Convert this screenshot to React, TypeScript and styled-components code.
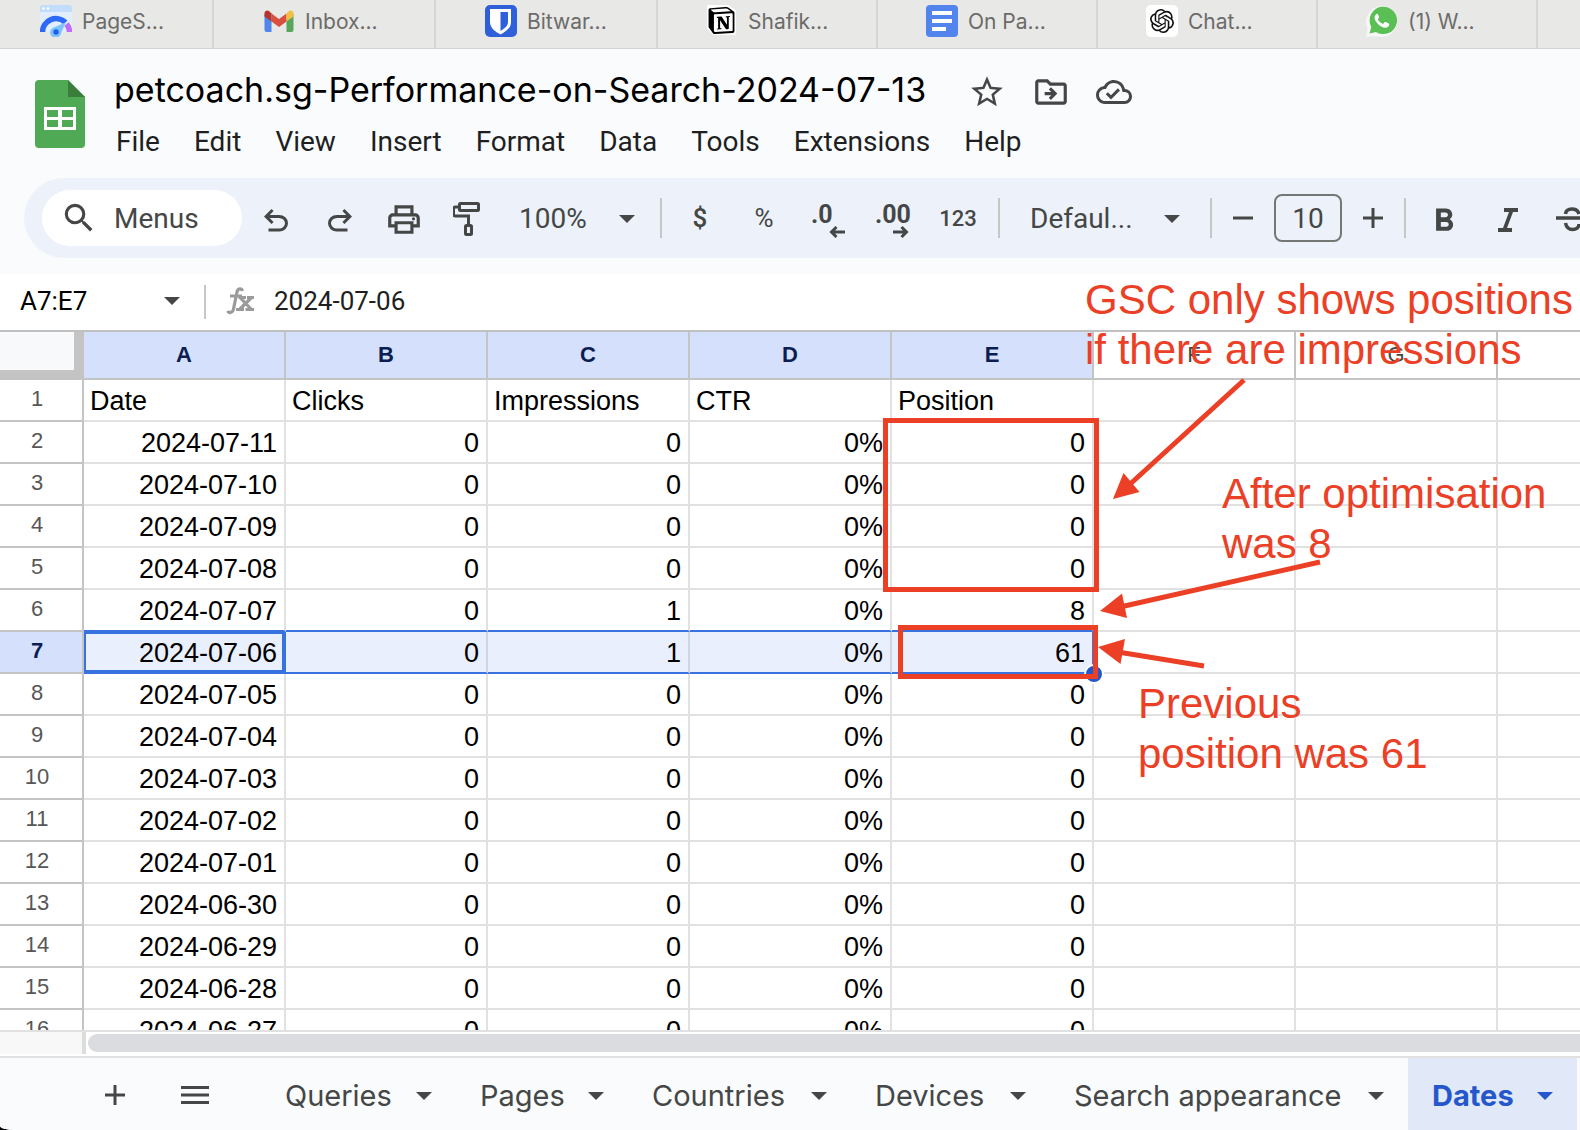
import React from "react";
import styled, { createGlobalStyle, css } from "styled-components";
import {
  MdStarBorder,
  MdOutlineDriveFileMove,
  MdOutlineCloudDone,
  MdSearch,
  MdOutlinePrint,
} from "react-icons/md";
import { SiOpenai, SiNotion } from "react-icons/si";

const ui = `Roboto, "Noto Sans", sans-serif`;
const display = `Inter, "Noto Sans", sans-serif`;
const cellFont = `"Liberation Sans", Arial, sans-serif`;
const red = "#eb4026";
const ink = "#444746";
const blue = "#3871e0";
const chrome = "#f9fbfd";

const Global = createGlobalStyle`
  * { box-sizing: border-box; }
  body { margin: 0; background: #000; font-family: ${ui}; }
  button, input, select { font: inherit; color: inherit; border: 0; padding: 0; margin: 0; background: none; outline: 0; }
  svg { display: block; flex: none; }
`;

const Window = styled.div`
  height: 100vh;
  display: flex;
  flex-direction: column;
  overflow: hidden;
  background: ${chrome};
  border-bottom-left-radius: 15px 4px;
`;

/* ---------- browser tabs ---------- */
const BrowserTabs = styled.nav`
  flex: none;
  display: flex;
  height: 49px;
  background: #e8e8e6;
  border-bottom: 1px solid #d2d2d1;
  overflow: hidden;
`;

const BrowserTab = styled.button<{ $w: number; $cut?: boolean }>`
  flex: none;
  width: ${(p) => p.$w}px;
  display: flex;
  align-items: center;
  justify-content: center;
  gap: 10px;
  padding: 0 ${(p) => (p.$cut ? 10 : 0)}px 6px 0;
  border-right: 2px solid #d6d6d5;
  color: #6b6b6a;
  font-family: ${display};
  font-size: 21px;
  line-height: 28px;
`;

const TabLabel = styled.span`
  width: 80px;
  padding-top: 2px;
  text-align: left;
  white-space: nowrap;
`;

const Tile = styled.span`
  width: 32px;
  height: 32px;
  flex: none;
  display: grid;
  place-items: center;
  border-radius: 5px;
  background: #fff;
  color: #111;
`;

/* ---------- document header ---------- */
const Header = styled.header`
  flex: none;
  padding: 17px 0 16px;
  background: ${chrome};
`;

const HeaderTop = styled.div`
  display: flex;
  gap: 29px;
  padding-left: 35px;
`;

const LogoBox = styled.a`
  padding-top: 14px;
`;

const TitleRow = styled.div`
  display: flex;
  align-items: flex-start;
  height: 52px;
`;

const DocTitle = styled.h1`
  margin: 0;
  min-width: 854px;
  font-family: ${display};
  font-size: 34px;
  font-weight: 400;
  line-height: 48px;
  color: #000;
  white-space: nowrap;
`;

const TitleActions = styled.div`
  display: flex;
  gap: 28px;
`;

const TitleAction = styled.button`
  width: 36px;
  height: 52px;
  display: grid;
  place-items: center;
  color: ${ink};
`;

const MenuBar = styled.div`
  display: flex;
  gap: 34px;
  height: 44px;
  padding-left: 2px;
`;

const MenuItem = styled.button`
  font-size: 28px;
  line-height: 44px;
  padding-top: 2px;
  color: #1f1f1f;
`;

/* ---------- toolbar ---------- */
const Toolbar = styled.div`
  display: flex;
  align-items: center;
  height: 80px;
  margin: 16px 0 0 24px;
  padding-left: 18px;
  border-radius: 40px 0 0 40px;
  background: #edf2fa;
  color: ${ink};
  overflow: hidden;
`;

const MenuSearch = styled.label`
  flex: none;
  display: flex;
  align-items: center;
  gap: 16px;
  width: 200px;
  height: 56px;
  padding-left: 18px;
  margin-right: 2px;
  border-radius: 28px;
  background: #fff;
`;

const MenuSearchInput = styled.input`
  width: 110px;
  font-size: 28px;
  &::placeholder { color: ${ink}; opacity: 1; }
`;

const Tool = styled.button<{ $w?: number; $size?: number; $bold?: boolean }>`
  flex: none;
  width: ${(p) => p.$w ?? 64}px;
  height: 56px;
  display: grid;
  place-items: center;
  font-size: ${(p) => p.$size ?? 26}px;
  font-weight: ${(p) => (p.$bold ? 500 : 400)};
`;

const Rule = styled.span`
  flex: none;
  width: 2px;
  height: 40px;
  margin: 0 6px;
  background: #c7c7c7;
`;

const Picker = styled.label<{ $w: number; $pad: number }>`
  flex: none;
  display: flex;
  align-items: center;
  justify-content: space-between;
  width: ${(p) => p.$w}px;
  padding: 2px ${(p) => p.$pad}px 0;
  font-size: 28px;
  select { appearance: none; line-height: 40px; }
`;

const Decimal = styled.span`
  display: flex;
  flex-direction: column;
  align-items: flex-start;
  width: 34px;
  padding-top: 5px;
  font-size: 25px;
  font-weight: 700;
  line-height: 22px;
  svg { align-self: flex-end; }
`;

const SizeInput = styled.input`
  flex: none;
  width: 68px;
  height: 48px;
  margin: 0 6px;
  border: 2px solid #747775;
  border-radius: 8px;
  text-align: center;
  font-size: 28px;
`;

/* ---------- formula bar ---------- */
const Workspace = styled.main`
  position: relative;
  flex: 1;
  min-height: 0;
  display: flex;
  flex-direction: column;
  background: #fff;
`;

const FormulaBar = styled.div`
  flex: none;
  display: flex;
  align-items: center;
  height: 56px;
  padding: 0 0 2px 20px;
  color: ${ink};
`;

const NameBox = styled.input`
  width: 144px;
  font-size: 26px;
  color: #000;
`;

const BarRule = styled.span`
  width: 2px;
  height: 34px;
  margin: 2px 20px 0 24px;
  background: #c7c7c7;
`;

const FormulaInput = styled.input`
  flex: 1;
  margin-left: 20px;
  font-size: 26px;
  color: #1f1f1f;
`;

/* ---------- grid ---------- */
const GridView = styled.div`
  flex: 1;
  min-height: 0;
  overflow: hidden;
  border-top: 2px solid #c0c0c0;
`;

const Sheet = styled.table`
  table-layout: fixed;
  width: 1700px;
  border-collapse: separate;
  border-spacing: 0;
  font-family: ${cellFont};
`;

const RowHeadCol = styled.col`
  width: 84px;
`;

const Corner = styled.td`
  height: 48px;
  padding: 0;
  background: #f8f9fa;
  border-right: 10px solid #c4c4c4;
  border-bottom: 10px solid #c4c4c4;
`;

const ColHead = styled.th<{ $on: boolean }>`
  height: 48px;
  padding: 0;
  border-right: 2px solid #c4c4c4;
  border-bottom: 2px solid #c4c4c4;
  background: ${(p) => (p.$on ? "#d5e1fc" : "#fff")};
  color: ${(p) => (p.$on ? "#0b1d51" : ink)};
  font-size: 22px;
  line-height: 24px;
  font-weight: ${(p) => (p.$on ? 700 : 400)};
`;

const RowHead = styled.th<{ $on: boolean }>`
  height: 42px;
  padding: 0 8px 2px 0;
  border-right: 2px solid #c4c4c4;
  border-bottom: 2px solid #c4c4c4;
  background: ${(p) => (p.$on ? "#d5e1fc" : "#fff")};
  color: ${(p) => (p.$on ? "#0b1d51" : "#575757")};
  font-size: 22px;
  line-height: 36px;
  font-weight: ${(p) => (p.$on ? 700 : 400)};
`;

const Cell = styled.td<{
  $left?: boolean;
  $range?: boolean;
  $aboveRange?: boolean;
  $active?: boolean;
  $rangeEnd?: boolean;
}>`
  height: 42px;
  padding: 2px 7px 0 6px;
  border-right: 2px solid #e1e1e1;
  border-bottom: 2px solid #e1e1e1;
  color: #000;
  font-size: 27px;
  line-height: 38px;
  text-align: ${(p) => (p.$left ? "left" : "right")};
  white-space: nowrap;
  ${(p) => p.$aboveRange && css`border-bottom-color: ${blue};`}
  ${(p) =>
    p.$range &&
    css`
      background: #e9effc;
      border-bottom-color: ${blue};
      border-right-color: ${p.$active || p.$rangeEnd ? blue : "#cfd5e3"};
    `}
  ${(p) => p.$active && css`box-shadow: inset 0 0 0 2px ${blue};`}
`;

const ScrollRow = styled.div`
  flex: none;
  display: flex;
  height: 26px;
  border-top: 2px solid #e1e1e1;
`;

const ScrollCorner = styled.div`
  width: 86px;
  height: 22px;
  background: #f8f8f8;
  border-right: 4px solid #dcdcdc;
`;

const Thumb = styled.div`
  flex: 1;
  height: 18px;
  margin: 2px 0 0 2px;
  border-radius: 9px 0 0 9px;
  background: #dadce0;
`;

/* ---------- sheet tabs ---------- */
const SheetBar = styled.footer`
  flex: none;
  display: flex;
  height: 74px;
  padding-left: 75px;
  border-top: 2px solid #e1e1e1;
  background: ${chrome};
  color: ${ink};
`;

const SheetTool = styled.button`
  width: 80px;
  padding-top: 2px;
  display: grid;
  place-items: center;
`;

const SheetTools = styled.div`
  display: flex;
  width: 186px;
`;

const SheetTab = styled.button<{ $w: number; $on?: boolean }>`
  flex: none;
  display: flex;
  align-items: center;
  justify-content: space-between;
  width: ${(p) => p.$w}px;
  padding: 3px 24px 0;
  font-family: ${display};
  font-size: 29px;
  white-space: nowrap;
  ${(p) => p.$on && css`background: #e1e8f7; color: #2557cc; font-weight: 700;`}
`;

/* ---------- annotations over the sheet ---------- */
const Markup = styled.svg`
  position: absolute;
  left: 0;
  top: 0;
  pointer-events: none;
`;

const Note = styled.p<{ $x: number; $y: number }>`
  position: absolute;
  left: ${(p) => p.$x}px;
  top: ${(p) => p.$y}px;
  margin: 0;
  color: ${red};
  font-family: ${cellFont};
  font-size: 42px;
  line-height: 50px;
  white-space: nowrap;
`;

/* ---------- drawings ---------- */
const Caret = () => (
  <svg width="16" height="8" viewBox="0 0 16 8" fill="currentColor">
    <path d="M0 0h16L8 8z" />
  </svg>
);

const PageSpeedLogo = () => (
  <svg width="32" height="32" viewBox="0 0 32 32">
    <path d="M0 7V3a3 3 0 0 1 3-3h26a3 3 0 0 1 3 3v4z" fill="#c2dcfb" />
    <path d="M0 7h32v20H0z" fill="#e3eefc" />
    <circle cx="3.5" cy="3.5" r="1.3" fill="#fff" />
    <circle cx="8" cy="3.5" r="1.3" fill="#fff" />
    <path d="M2.5 27a13.5 13.5 0 0 1 23-9.5" fill="none" stroke="#2d68f6" strokeWidth="5.5" />
    <path d="M26.6 19A13.5 13.5 0 0 1 29.5 27" fill="none" stroke="#bf6cf7" strokeWidth="5.5" />
    <path d="M26 17 20.5 29A5.3 5.3 0 1 1 12 23.5z" fill="#7cc4fb" />
    <circle cx="16" cy="27" r="5.2" fill="#7cc4fb" />
    <circle cx="16" cy="27" r="2.7" fill="#1f5df0" />
  </svg>
);

const GmailLogo = () => (
  <svg width="32" height="32" viewBox="-1.5 -5 32 32">
    <path d="M0 4v16a2 2 0 0 0 2 2h5V9z" fill="#4f86ec" />
    <path d="M29 4v16a2 2 0 0 1-2 2h-5V9z" fill="#58a55c" />
    <path d="M7 3.5v8l7.500 5.500 7.500-5.500v-8L14.500 9z" fill="#d85140" />
    <path d="M0 3.500v3L7 11.500v-8L4.500 1C2.500-.5 0 1 0 3.500z" fill="#b3352b" />
    <path d="M29 3.500v3l-7 5v-8L24.500 1C26.500-.5 29 1 29 3.500z" fill="#f2bf42" />
  </svg>
);

const BitwardenLogo = () => (
  <svg width="32" height="32" viewBox="0 0 32 32">
    <rect width="32" height="32" rx="5" fill="#2f5fd9" />
    <path d="M5 4h21v13c0 6-5 9.500-10.500 12.500C10 26.500 5 23 5 17z" fill="#fff" />
    <path d="M15.500 7H23v10c0 4-3.500 6.500-7.500 9z" fill="#2f5fd9" />
  </svg>
);

const DocsLogo = () => (
  <svg width="32" height="32" viewBox="0 0 32 32">
    <rect width="32" height="32" rx="4" fill="#5383ec" />
    <path d="M6 6h20v4H6zM6 14h20v4H6zM6 22h14v4H6z" fill="#fff" />
  </svg>
);

const NotionLogo = () => (
  <svg width="32" height="32" viewBox="0 0 32 32">
    <path d="M2 1h20l7 5v23H8l-6-6z" fill="#fff" stroke="#fff" strokeWidth="2" strokeLinejoin="round" />
    <SiNotion x={2} y={2} size={27} color="#000" />
  </svg>
);

const WhatsAppLogo = () => (
  <svg width="32" height="32" viewBox="0 0 32 32">
    <path d="M0 32l1.500-9A15.500 15.500 0 1 1 10 31z" fill="#f6f7f5" />
    <path d="M3.500 28.500 5.300 22A13.700 13.700 0 1 1 10 27z" fill="#5abf55" />
    <path
      d="M11.600 8.800c-.7 0-1.400.3-1.900.9-2 2.100-1.300 5.200 1.600 8.600 3 3.500 6.800 5.200 9.400 4.300 1.600-.5 2.600-1.800 2.500-3.300 0-.5-.2-.7-.7-1l-2.800-1.300c-.5-.2-.8-.1-1.100.3l-1 1.300c-.3.300-.6.400-1 .2-2-.9-3.500-2.200-4.600-4.100-.2-.4-.2-.7.1-1l.9-1.100c.2-.3.200-.6.100-.9l-1.200-2.500c-.1-.2-.2-.3-.3-.4z"
      fill="#fff"
    />
  </svg>
);

const SheetsLogo = () => (
  <svg width="50" height="68" viewBox="0 0 50 68">
    <path d="M4 0h29l17 17v47a4 4 0 0 1-4 4H4a4 4 0 0 1-4-4V4a4 4 0 0 1 4-4z" fill="#50a955" />
    <path d="M33 0l17 17H33z" fill="#3b7d3a" />
    <path
      fillRule="evenodd"
      d="M9 27h32v23H9zM12 30v7h11v-7zM27 30v7h11v-7zM12 40v7h11v-7zM27 40v7h11v-7z"
      fill="#fff"
    />
  </svg>
);

const UndoIcon = () => (
  <svg width="36" height="36" viewBox="0 -1040 960 960" fill="currentColor">
    <path d="M280-200v-80h284q63 0 109.500-40T720-420q0-60-46.500-100T564-560H312l104 104-56 56-200-200 200-200 56 56-104 104h252q97 0 166.500 63T800-420q0 94-69.500 157T564-200H280Z" />
  </svg>
);

const RedoIcon = () => (
  <svg width="36" height="36" viewBox="0 -1040 960 960" fill="currentColor">
    <path d="M396-200q-97 0-166.500-63T160-420q0-94 69.500-157T396-640h252L544-744l56-56 200 200-200 200-56-56 104-104H396q-63 0-109.500 40T240-420q0 60 46.500 100T396-280h284v80H396Z" />
  </svg>
);

const PrintIcon = () => <MdOutlinePrint size={38} viewBox="0 -1 24 24" />;

const PaintIcon = () => (
  <svg width="30" height="38" viewBox="1 -3 30 38" fill="none" stroke="currentColor" strokeWidth="3">
    <rect x="7.500" y="1.500" width="19" height="7" rx="1" />
    <path d="M7 5H3.500a2 2 0 0 0-2 2v5a2 2 0 0 0 2 2H16.500v9" />
    <rect x="13.500" y="23.500" width="6" height="9" rx="1" />
  </svg>
);

const ArrowIcon = ({ left }: { left?: boolean }) => (
  <svg width="16" height="12" viewBox="0 0 16 12" fill="none" stroke="currentColor" strokeWidth="3">
    <path d={left ? "M16 6H3M7.500 1l-5 5 5 5" : "M0 6h13M8.500 1l5 5-5 5"} />
  </svg>
);

const PlusIcon = () => (
  <svg width="20" height="20" viewBox="0 0 20 20" fill="currentColor">
    <path d="M8.500 0h3v8.500H20v3h-8.500V20h-3v-8.500H0v-3h8.500z" />
  </svg>
);

const MinusIcon = () => (
  <svg width="20" height="20" viewBox="0 0 20 20" fill="currentColor">
    <path d="M0 8.500h20v3H0z" />
  </svg>
);

const BoldIcon = () => (
  <svg width="38" height="38" viewBox="0 -2 24 24" fill="currentColor">
    <path d="M15.600 10.790c.97-.67 1.650-1.770 1.650-2.790 0-2.260-1.750-4-4-4H7v14h7.040c2.090 0 3.710-1.700 3.710-3.790 0-1.520-.86-2.820-2.150-3.420zM10 6.500h3c.83 0 1.500.67 1.500 1.500s-.67 1.500-1.500 1.500h-3v-3zm3.500 9H10v-3h3.500c.83 0 1.500.67 1.500 1.500s-.67 1.500-1.500 1.500z" />
  </svg>
);

const ItalicIcon = () => (
  <svg width="20" height="28" viewBox="0 -4 20 28" fill="currentColor">
    <path d="M6 0h14v4h-5L9 20h5v4H0v-4h5L11 4H6z" />
  </svg>
);

const StrikeIcon = () => (
  <svg width="32" height="28" viewBox="0 0 32 28" fill="none" stroke="currentColor" strokeWidth="3.5">
    <path d="M0 14h32M23 10c-1-3.500-3.500-5-7-5-3.800 0-6.200 1.700-6.500 5M9.500 19c.8 4 3.200 6.500 7 6.500 3.800 0 6.500-2 6.500-5.500" />
  </svg>
);

const FxIcon = () => (
  <svg width="28" height="28" viewBox="0 0 28 28" fill="none" stroke="#9b9b9b" strokeWidth="3.200">
    <path d="M16.500 4C15.500 1 12 1 11 5L7.500 22c-.8 4-4.500 4.500-6 2M4 9h12" />
    <path d="M12.500 10.500H20M21 10.500h7M10 22.500h8M19.500 22.500H28" strokeWidth="3.200" />
    <path d="M14.500 11l10.500 11M25 11L14 22" />
  </svg>
);

const MenuIcon = () => (
  <svg width="28" height="18" viewBox="0 0 28 18" fill="currentColor">
    <path d="M0 0h28v3H0zM0 7.500h28v3H0zM0 15h28v3H0z" />
  </svg>
);

/* ---------- data ---------- */
const browserTabs = [
  { label: "PageS...", w: 214, icon: <PageSpeedLogo />, cut: true },
  { label: "Inbox...", w: 222, icon: <GmailLogo /> },
  { label: "Bitwar...", w: 222, icon: <BitwardenLogo /> },
  { label: "Shafik...", w: 220, icon: <NotionLogo /> },
  { label: "On Pa...", w: 220, icon: <DocsLogo /> },
  { label: "Chat...", w: 220, icon: <Tile><SiOpenai size={24} /></Tile> },
  { label: "(1) W...", w: 220, icon: <WhatsAppLogo /> },
];

const menus = ["File", "Edit", "View", "Insert", "Format", "Data", "Tools", "Extensions", "Help"];
const columns = ["A", "B", "C", "D", "E", "F", "G", "H"];

const records: string[][] = [
  ["Date", "Clicks", "Impressions", "CTR", "Position"],
  ["2024-07-11", "0", "0", "0%", "0"],
  ["2024-07-10", "0", "0", "0%", "0"],
  ["2024-07-09", "0", "0", "0%", "0"],
  ["2024-07-08", "0", "0", "0%", "0"],
  ["2024-07-07", "0", "1", "0%", "8"],
  ["2024-07-06", "0", "1", "0%", "61"],
  ["2024-07-05", "0", "0", "0%", "0"],
  ["2024-07-04", "0", "0", "0%", "0"],
  ["2024-07-03", "0", "0", "0%", "0"],
  ["2024-07-02", "0", "0", "0%", "0"],
  ["2024-07-01", "0", "0", "0%", "0"],
  ["2024-06-30", "0", "0", "0%", "0"],
  ["2024-06-29", "0", "0", "0%", "0"],
  ["2024-06-28", "0", "0", "0%", "0"],
  ["2024-06-27", "0", "0", "0%", "0"],
];

const selectedRow = 7;

const sheets = [
  { label: "Queries", w: 195 },
  { label: "Pages", w: 172 },
  { label: "Countries", w: 223 },
  { label: "Devices", w: 199 },
  { label: "Search appearance", w: 358 },
  { label: "Dates", w: 169, on: true },
];

export default function App() {
  return (
    <Window>
      <Global />
      <BrowserTabs aria-label="Browser tabs">
        {browserTabs.map((t) => (
          <BrowserTab key={t.label} $w={t.w} $cut={t.cut}>
            {t.icon}
            <TabLabel>{t.label}</TabLabel>
          </BrowserTab>
        ))}
      </BrowserTabs>

      <Header>
        <HeaderTop>
          <LogoBox href="#" aria-label="Sheets home">
            <SheetsLogo />
          </LogoBox>
          <div>
            <TitleRow>
              <DocTitle>petcoach.sg-Performance-on-Search-2024-07-13</DocTitle>
              <TitleActions>
                <TitleAction aria-label="Star"><MdStarBorder size={38} /></TitleAction>
                <TitleAction aria-label="Move"><MdOutlineDriveFileMove size={38} /></TitleAction>
                <TitleAction aria-label="Saved"><MdOutlineCloudDone size={36} /></TitleAction>
              </TitleActions>
            </TitleRow>
            <MenuBar>
              {menus.map((m) => (
                <MenuItem key={m}>{m}</MenuItem>
              ))}
            </MenuBar>
          </div>
        </HeaderTop>

        <Toolbar role="toolbar" aria-label="Main">
          <MenuSearch>
            <MdSearch size={38} />
            <MenuSearchInput placeholder="Menus" aria-label="Menus" />
          </MenuSearch>
          <Tool aria-label="Undo"><UndoIcon /></Tool>
          <Tool aria-label="Redo"><RedoIcon /></Tool>
          <Tool aria-label="Print"><PrintIcon /></Tool>
          <Tool aria-label="Paint format"><PaintIcon /></Tool>
          <Picker $w={154} $pad={19}>
            <select aria-label="Zoom"><option>100%</option></select>
            <Caret />
          </Picker>
          <Rule />
          <Tool $bold>$</Tool>
          <Tool>%</Tool>
          <Tool aria-label="Decrease decimal places">
            <Decimal>.0<ArrowIcon left /></Decimal>
          </Tool>
          <Tool aria-label="Increase decimal places">
            <Decimal>.00<ArrowIcon /></Decimal>
          </Tool>
          <Tool $w={68} $size={22} $bold>123</Tool>
          <Rule />
          <Picker $w={198} $pad={24}>
            <select aria-label="Font"><option>Defaul...</option></select>
            <Caret />
          </Picker>
          <Rule />
          <Tool $w={50} aria-label="Decrease font size"><MinusIcon /></Tool>
          <SizeInput defaultValue="10" aria-label="Font size" />
          <Tool $w={50} aria-label="Increase font size"><PlusIcon /></Tool>
          <Rule />
          <Tool aria-label="Bold"><BoldIcon /></Tool>
          <Tool aria-label="Italic"><ItalicIcon /></Tool>
          <Tool aria-label="Strikethrough"><StrikeIcon /></Tool>
        </Toolbar>
      </Header>

      <Workspace>
        <FormulaBar>
          <NameBox defaultValue="A7:E7" aria-label="Name box" />
          <Caret />
          <BarRule />
          <FxIcon />
          <FormulaInput defaultValue="2024-07-06" aria-label="Formula" />
        </FormulaBar>

        <GridView>
          <Sheet>
            <colgroup>
              <RowHeadCol />
              {columns.map((c) => <col key={c} />)}
            </colgroup>
            <thead>
              <tr>
                <Corner />
                {columns.map((c, i) => (
                  <ColHead key={c} $on={i < 5} scope="col">{c}</ColHead>
                ))}
              </tr>
            </thead>
            <tbody>
              {records.map((r, i) => {
                const n = i + 1;
                return (
                  <tr key={n}>
                    <RowHead $on={n === selectedRow} scope="row">{n}</RowHead>
                    {columns.map((c, j) => (
                      <Cell
                        key={c}
                        $left={n === 1}
                        $range={n === selectedRow && j < 5}
                        $aboveRange={n === selectedRow - 1 && j < 5}
                        $active={n === selectedRow && j === 0}
                        $rangeEnd={j === 4}
                      >
                        {r[j]}
                      </Cell>
                    ))}
                  </tr>
                );
              })}
            </tbody>
          </Sheet>
        </GridView>

        <ScrollRow>
          <ScrollCorner />
          <Thumb />
        </ScrollRow>

        <Markup width="1330" height="420" viewBox="0 0 1330 420">
          <circle cx="1094" cy="400" r="9" fill="#2557cc" stroke="#fff" strokeWidth="2" />
          <g fill="none" stroke={red} strokeWidth="5">
            <rect x="885.5" y="146.5" width="211" height="169" />
            <rect x="900.5" y="353.5" width="195" height="49" />
            <path d="M1244 106L1128 212M1320 288L1120 333M1204 392L1118 378" />
          </g>
          <g fill={red}>
            <path d="M1113 225l10.500-26 16 19z" />
            <path d="M1100 337l22-17.500 5 24.500z" />
            <path d="M1098 373l27-8-4.500 25z" />
          </g>
        </Markup>
        <Note $x={1085} $y={1}>GSC only shows positions<br />if there are impressions</Note>
        <Note $x={1222} $y={195}>After optimisation<br />was 8</Note>
        <Note $x={1138} $y={405}>Previous<br />position was 61</Note>
      </Workspace>

      <SheetBar>
        <SheetTools>
          <SheetTool aria-label="Add sheet"><PlusIcon /></SheetTool>
          <SheetTool aria-label="All sheets"><MenuIcon /></SheetTool>
        </SheetTools>
        {sheets.map((s) => (
          <SheetTab key={s.label} $w={s.w} $on={s.on}>
            {s.label}
            <Caret />
          </SheetTab>
        ))}
      </SheetBar>
    </Window>
  );
}
